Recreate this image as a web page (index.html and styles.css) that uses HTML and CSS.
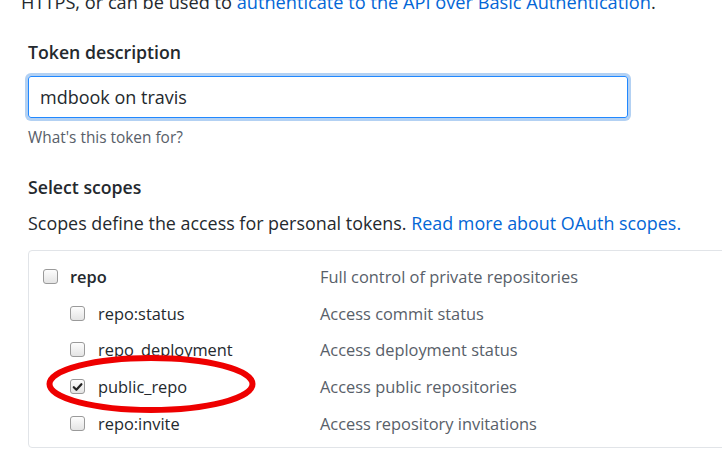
FILE: index.html
```html
<!DOCTYPE html>
<html>
<head>
<meta charset="utf-8">
<link rel="stylesheet" href="styles.css">
</head>
<body>
<div class="page">
  <p class="intro">HTTPS, or can be used to <a href="#">authenticate to the API over Basic Authentication</a>.</p>

  <div class="field">
    <label class="label">Token description</label>
    <div class="input">mdbook on travis</div>
    <p class="note">What's this token for?</p>
  </div>

  <div class="field scopes-field">
    <h3 class="label">Select scopes</h3>
    <p class="lead">Scopes define the access for personal tokens. <a href="#">Read more about OAuth scopes.</a></p>
    <div class="scopes">
      <div class="row">
        <div class="name top"><span class="cb"></span><b>repo</b></div>
        <div class="desc">Full control of private repositories</div>
      </div>
      <div class="row">
        <div class="name sub"><span class="cb"></span>repo:status</div>
        <div class="desc">Access commit status</div>
      </div>
      <div class="row">
        <div class="name sub"><span class="cb"></span>repo_deployment</div>
        <div class="desc">Access deployment status</div>
      </div>
      <div class="row">
        <div class="name sub"><span class="cb checked"><svg width="14" height="14" viewBox="0 0 14 14"><path d="M3 7.2 L5.8 10 L11.2 4" fill="none" stroke="#222" stroke-width="2.4" stroke-linecap="round" stroke-linejoin="round"/></svg></span>public_repo</div>
        <div class="desc">Access public repositories</div>
      </div>
      <div class="row">
        <div class="name sub"><span class="cb"></span>repo:invite</div>
        <div class="desc">Access repository invitations</div>
      </div>
      <svg class="mark" width="220" height="68" viewBox="0 0 220 68"><ellipse cx="110" cy="34" rx="101.5" ry="26" fill="none" stroke="#ee0000" stroke-width="6"/></svg>
    </div>
  </div>
</div>
</body>
</html>
```

FILE: styles.css
```css
* { box-sizing: border-box; }
html, body { margin: 0; padding: 0; background: #fff; }
body {
  font-family: "Open Sans", "Noto Sans", sans-serif;
  color: #24292e;
  font-size: 16px;
  overflow: hidden;
}
a { color: #0366d6; text-decoration: none; }
.page { padding-left: 28px; width: 722px; }
.intro {
  margin: -10px -40px 0 -7px;
  font-size: 18.2px;
  line-height: 24px;
  white-space: nowrap;
}
.field { margin-top: 25px; }
.label {
  display: block;
  margin: 0;
  font-size: 17.7px;
  font-weight: 600;
  line-height: 26px;
}
.input {
  margin-top: 11px;
  width: 600px;
  height: 42px;
  border: 1px solid #2188ff;
  border-radius: 3px;
  box-shadow: 0 0 0 3px rgba(3, 102, 214, 0.3);
  padding: 0 11px;
  font-size: 18px;
  line-height: 40px;
}
.note {
  margin: 9px 0 0;
  font-size: 15.4px;
  color: #586069;
  line-height: 22px;
}
.scopes-field { margin-top: 25px; }
.lead {
  margin: 11px 0 0;
  font-size: 17.9px;
  line-height: 24px;
  white-space: nowrap;
}
.scopes {
  position: relative;
  margin-top: 15px;
  margin-right: -40px;
  border: 1px solid #e1e4e8;
  border-radius: 4px;
  padding: 7px 0 5px;
}
.row {
  display: flex;
  align-items: center;
  height: 36.75px;
  font-size: 16.4px;
}
.name {
  display: flex;
  align-items: center;
  width: 291px;
}
.name.top { padding-left: 14px; }
.name.top .cb { margin-right: 12px; }
.name.sub { padding-left: 41px; }
.name b { font-weight: 600; }
.cb {
  width: 15px;
  height: 15px;
  margin-right: 13px;
  border: 1px solid #9a9a9a;
  border-radius: 3px;
  background: linear-gradient(#fdfdfd, #e4e4e4);
  display: inline-flex;
  align-items: center;
  justify-content: center;
  flex: none;
}
.cb svg { display: block; }
.desc { color: #586069; }
.mark {
  position: absolute;
  left: 12px;
  top: 99px;
}
```
